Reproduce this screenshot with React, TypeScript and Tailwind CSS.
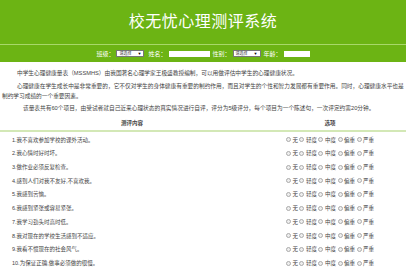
import React from 'react';

const questions = [
  '1.我不喜欢参加学校的课外活动。',
  '2.我心情时好时坏。',
  '3.做作业必须反复检查。',
  '4.感到人们对我不友好,不喜欢我。',
  '5.我感到苦恼。',
  '6.我感到紧张或容易紧张。',
  '7.我学习劲头时高时低。',
  '8.我对现在的学校生活感到不适应。',
  '9.我看不惯现在的社会风气。',
  '10.为保证正确,做事必须做的很慢。',
];

const levels = ['无', '轻度', '中度', '偏重', '严重'];

const font = { fontFamily: '"Liberation Sans", "Noto Sans CJK SC", sans-serif' };

function FakeSelect() {
  return (
    <span className="inline-flex items-center justify-between w-[28px] h-[7px] bg-white border border-[#777] px-[2px] text-[4px] leading-none text-[#333]">
      <span>请选择</span>
      <span className="text-[4px] text-black">▼</span>
    </span>
  );
}

function Radio() {
  return <span className="inline-block w-[5px] h-[5px] rounded-full border border-[#aaa] bg-[#eee]" />;
}

export default function App() {
  return (
    <div className="w-[406px] h-[271px] overflow-hidden bg-white text-[#444]" style={font}>
      <div className="h-[44px] bg-[#6cb414] flex items-center justify-center">
        <h1 className="text-white text-[16px] font-normal leading-none tracking-[0.5px]">校无忧心理测评系统</h1>
      </div>
      <div className="h-px bg-[#a8d86a]" />
      <div className="h-[17px] bg-[#6cb414] flex items-center justify-center gap-[2px] text-white text-[6px] leading-none">
        <span>班级：</span>
        <FakeSelect />
        <span className="ml-[2px]">姓名：</span>
        <span className="inline-block w-[41px] h-[6px] bg-white" />
        <span className="ml-[1px]">性别：</span>
        <FakeSelect />
        <span className="ml-[1px]">年龄：</span>
        <span className="inline-block w-[26px] h-[6px] bg-white" />
      </div>

      <div className="px-[2px] pt-[6px] text-[5.7px] leading-[10px] space-y-[2.5px]">
        <p className="indent-[15px]">中学生心理健康量表（MSSMHS）由我国著名心理学家王极盛教授编制，可以用做评估中学生的心理健康状况。</p>
        <p className="indent-[15px]">心理健康在学生成长中是非常重要的，它不仅对学生的身体健康有重要的制约作用，而且对学生的个性和智力发展都有重要作用。同时，心理健康水平也是制约学习成绩的一个重要因素。</p>
        <p className="indent-[21px]">该量表共有60个项目，由受试者就自己近来心理状态的真实情况进行自评，评分为5级评分，每个项目为一个陈述句，一次评定约需20分钟。</p>
      </div>

      <div className="mt-[4px]">
        <div className="flex h-[13px] items-center text-[5.5px] font-bold">
          <div className="w-[264px] text-center">测评内容</div>
          <div className="w-[132px] text-center">选项</div>
        </div>
        <div className="h-[2px] bg-[#d3e8b6]" />
        <div className="pt-[1px]">
          {questions.map(q => (
            <div key={q} className="flex h-[13.7px] items-center text-[5.5px]">
              <div className="w-[264px] pl-[12px]">{q}</div>
              <div className="w-[132px] flex justify-center items-center gap-[1.5px]">
                {levels.map(l => (
                  <span key={l} className="inline-flex items-center gap-[1.5px]">
                    <Radio />
                    <span>{l}</span>
                  </span>
                ))}
              </div>
            </div>
          ))}
        </div>
      </div>
    </div>
  );
}
